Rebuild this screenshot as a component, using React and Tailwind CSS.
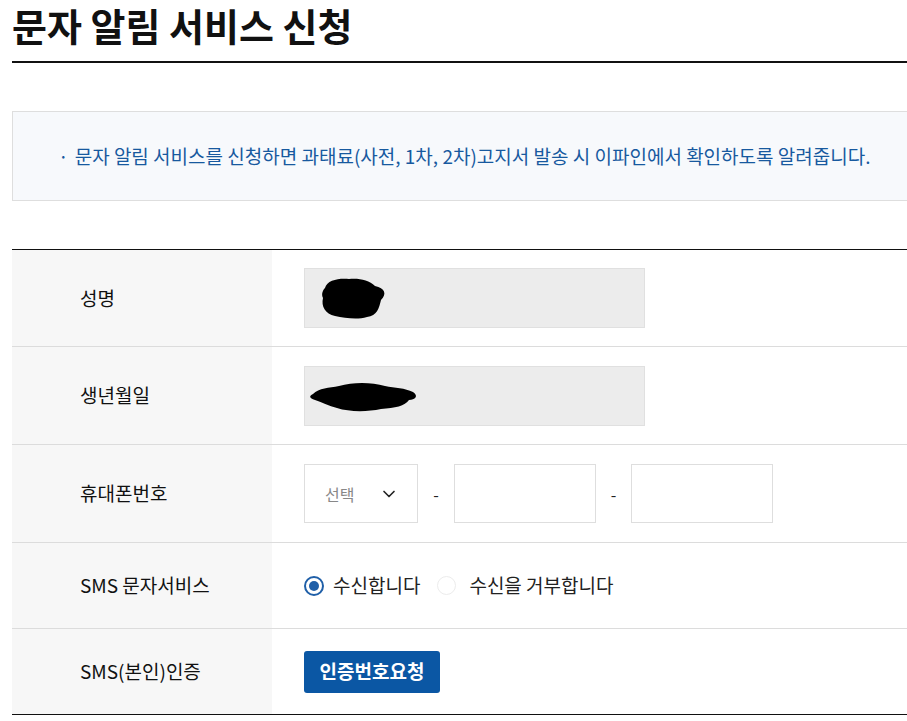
import { ChevronDown } from 'lucide-react';

const font = { fontFamily: '"Noto Sans CJK KR", "Noto Sans", sans-serif' };

function Row({ label, children, className = '' }) {
  return (
    <div className={`grid grid-cols-[260px_1fr] border-b border-[#dcdcdc] ${className}`}>
      <div className="bg-[#f7f7f7] flex items-center pl-[68px] text-[19px] text-[#111]">{label}</div>
      <div className="flex items-center pl-8">{children}</div>
    </div>
  );
}

function Masked({ shape }) {
  return (
    <div className="w-[341px] h-[60px] bg-[#ececec] border border-[#e0e0e0] flex items-center">
      {shape}
    </div>
  );
}

export default function App() {
  return (
    <div className="bg-white min-h-[721px] pl-3 overflow-hidden" style={font}>
      {/* title */}
      <h1 className="h-[61px] pt-[2px] text-[38px] font-bold text-[#111] leading-[46px]">
        문자 알림 서비스 신청
      </h1>
      <div className="h-[2px] bg-[#111]" />

      {/* notice */}
      <div className="mt-12 h-[90px] border border-[#dedede] border-r-0 bg-[#f7f9fc] flex items-center pl-[45px] text-[19px] text-[#17599f] whitespace-nowrap">
        <span className="mr-[6px]">·</span>
        문자 알림 서비스를 신청하면 과태료(사전, 1차, 2차)고지서 발송 시 이파인에서 확인하도록 알려줍니다.
      </div>

      {/* form table */}
      <div className="mt-12 border-t border-[#111]">
        <Row label="성명" className="h-[97px]">
          <Masked
            shape={
              <svg width="70" height="44" viewBox="0 0 70 44" className="ml-[14px]">
                <path d="M6 12 C8 4 20 2 30 3 C40 2 50 4 56 10 C66 12 68 18 62 24 C60 32 58 40 48 41 C38 44 26 42 16 40 C6 38 2 30 4 22 C2 18 4 14 6 12 Z" fill="#000" />
              </svg>
            }
          />
        </Row>
        <Row label="생년월일" className="h-[98px]">
          <Masked
            shape={
              <svg width="110" height="36" viewBox="0 0 110 36" className="ml-[4px]">
                <path d="M4 16 C10 10 20 10 30 8 C44 4 62 4 76 8 C86 10 96 10 104 14 C110 18 106 22 100 22 C96 28 86 30 72 31 C58 34 40 34 28 30 C20 28 12 24 6 22 C0 20 0 18 4 16 Z" fill="#000" />
              </svg>
            }
          />
        </Row>
        <Row label="휴대폰번호" className="h-[98px]">
          <div className="flex items-center">
            <div className="w-[114px] h-[59px] border border-[#dedede] flex items-center justify-between pl-[20px] pr-[18px]">
              <span className="text-[16px] text-[#888]">선택</span>
              <ChevronDown size={20} strokeWidth={2} className="text-[#222]" />
            </div>
            <span className="w-[36px] text-center text-[16px] text-[#222]">-</span>
            <div className="w-[142px] h-[59px] border border-[#dedede]" />
            <span className="w-[35px] text-center text-[16px] text-[#222]">-</span>
            <div className="w-[142px] h-[59px] border border-[#dedede]" />
          </div>
        </Row>
        <Row label="SMS 문자서비스" className="h-[86px]">
          <label className="flex items-center gap-[9px] text-[19px] text-[#222]">
            <span className="w-[20px] h-[20px] rounded-full border-2 border-[#1f5fa8] flex items-center justify-center">
              <span className="w-[10px] h-[10px] rounded-full bg-[#1f5fa8]" />
            </span>
            수신합니다
          </label>
          <label className="flex items-center gap-[13px] text-[19px] text-[#222] ml-[17px]">
            <span className="w-[19px] h-[19px] rounded-full border border-[#ececec]" />
            수신을 거부합니다
          </label>
        </Row>
        <div className="grid grid-cols-[260px_1fr] h-[86px] border-b border-[#111]">
          <div className="bg-[#f7f7f7] flex items-center pl-[68px] text-[19px] text-[#111]">SMS(본인)인증</div>
          <div className="flex items-center pl-8">
            <button className="w-[136px] h-[42px] rounded-[3px] bg-[#0b57a4] text-white text-[19px] font-bold">
              인증번호요청
            </button>
          </div>
        </div>
      </div>
    </div>
  );
}
